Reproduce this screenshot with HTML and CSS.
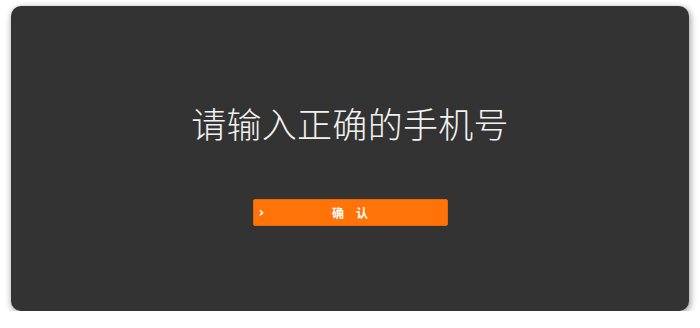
FILE: index.html
```html
<!DOCTYPE html>
<html lang="zh">
<head>
<meta charset="utf-8">
<link rel="stylesheet" href="styles.css">
</head>
<body>
<div class="card">
  <h1 class="title">请输入正确的手机号</h1>
  <button class="btn" type="button">
    <span class="chev">›</span>
    <span class="label"><span>确</span><span>认</span></span>
  </button>
</div>
</body>
</html>
```
FILE: styles.css
```css
html, body {
  margin: 0;
  padding: 0;
  background: #ffffff;
}
body {
  padding: 6px 0 0 11px;
  font-family: "Noto Sans CJK SC", "Noto Sans", sans-serif;
}
.card {
  box-sizing: border-box;
  width: 678px;
  height: 305px;
  background: #333333;
  border-radius: 10px;
  box-shadow: 1px 2px 7px rgba(0, 0, 0, 0.45);
  display: flex;
  flex-direction: column;
  align-items: center;
  padding-top: 97px;
}
.title {
  margin: 0;
  font-size: 35px;
  line-height: 40px;
  font-weight: 300;
  color: #f2f2f2;
  letter-spacing: 0.3px;
}
.btn {
  position: relative;
  margin-top: 56px;
  width: 195px;
  height: 27px;
  background: #ff7308;
  border: 1px solid #e5690a;
  border-radius: 2px;
  padding: 0;
  display: flex;
  align-items: center;
  justify-content: center;
  color: #ffffff;
  font-family: "Noto Sans CJK SC", sans-serif;
}
.label {
  display: flex;
  gap: 12px;
  font-size: 12px;
  font-weight: 700;
  line-height: 16px;
}
.chev {
  position: absolute;
  left: 5px;
  top: 4px;
  font-family: "DejaVu Sans", sans-serif;
  font-size: 14px;
  line-height: 16px;
  font-weight: 700;
}
```
